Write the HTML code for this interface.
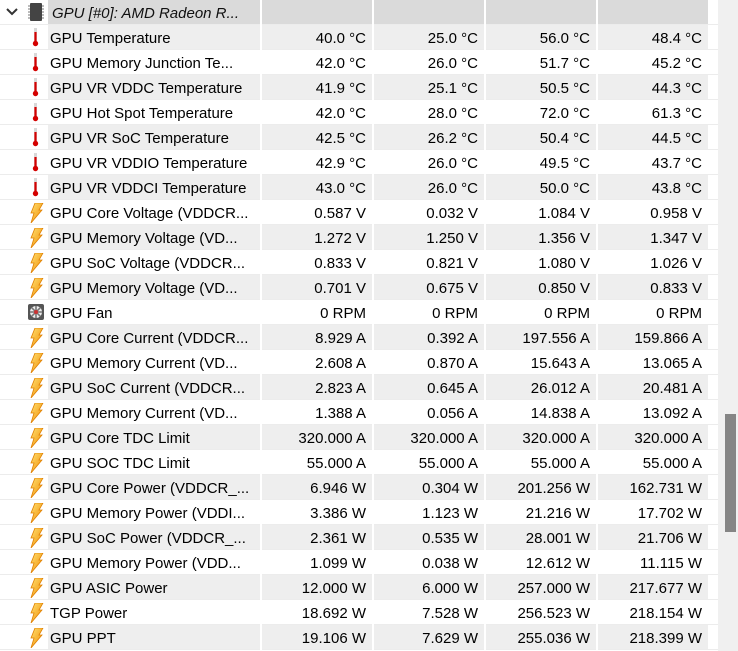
<!DOCTYPE html>
<html><head><meta charset="utf-8"><style>
body{margin:0;width:738px;height:651px;background:#fff;overflow:hidden;font-family:Tahoma,"Liberation Sans","DejaVu Sans",sans-serif;font-size:15px;color:#000;position:relative}
.r{position:absolute;left:0;width:718px;height:25px;border-bottom:1px solid #ececec;box-sizing:border-box}
.bg{position:absolute;left:48px;width:660px;top:0;height:24px}
.g .bg{background:#eeeeee}
.h .bg{background:#dadada}
.n{position:absolute;left:50px;top:5px;white-space:nowrap}
.v{position:absolute;top:5px;width:106px;text-align:right;white-space:nowrap}
.c1{left:260px}.c2{left:372px}.c3{left:484px}.c4{left:596px}
.sep{position:absolute;top:0;height:651px;width:2px;background:#fff}
.ic{position:absolute;left:27px;top:3px}
.sb{position:absolute;left:718px;top:0;width:20px;height:651px;background:#f0f0f0}
.th{position:absolute;left:725px;top:414px;width:11px;height:118px;background:#858585}
</style></head><body>
<svg width="0" height="0" style="position:absolute"><defs>
<g id="t"><rect x="7" y="0" width="3" height="15" fill="#d8d8d8"/><rect x="7.4" y="4" width="2.2" height="11" fill="#d40000"/><circle cx="8.5" cy="15.5" r="2.7" fill="#d40000"/></g>
<linearGradient id="lg" x1="0" y1="0" x2="1" y2="1"><stop offset="0" stop-color="#ffe070"/><stop offset="1" stop-color="#f08a00"/></linearGradient>
<g id="b"><path d="M8 0 L16 0 L12 7 L15 7 L4 20 L7 10 L4 10 Z" fill="url(#lg)" stroke="#e08000" stroke-width="0.8"/></g>
<g id="f"><rect x="1" y="1" width="16" height="16" rx="2" fill="#555"/><circle cx="9" cy="9" r="6" fill="#eee"/><path d="M9 3V15M3 9H15M4.8 4.8L13.2 13.2M13.2 4.8L4.8 13.2" stroke="#777" stroke-width="1.6"/><circle cx="9" cy="9" r="2" fill="#c33"/></g>
</defs></svg>

<div class="r h" style="top:0"><div class="bg"></div>
<svg style="position:absolute;left:6px;top:7px" width="12" height="10"><path d="M1 2 L6 7 L11 2" stroke="#333" stroke-width="2" fill="none"/></svg>
<svg style="position:absolute;left:27px;top:2px" width="18" height="20"><rect x="3" y="1" width="12" height="18" rx="1" fill="#444"/><path d="M1 4h2M1 7h2M1 10h2M1 13h2M1 16h2M15 4h2M15 7h2M15 10h2M15 13h2M15 16h2" stroke="#777"/></svg>
<div class="n" style="left:52px;font-style:italic;color:#111">GPU [#0]: AMD Radeon R...</div></div>

<div class="r g" style="top:25px"><div class="bg"></div><svg class="ic" width="18" height="20"><use href="#t"/></svg><div class="n">GPU Temperature</div><div class="v c1">40.0 °C</div><div class="v c2">25.0 °C</div><div class="v c3">56.0 °C</div><div class="v c4">48.4 °C</div></div>
<div class="r" style="top:50px"><div class="bg"></div><svg class="ic" width="18" height="20"><use href="#t"/></svg><div class="n">GPU Memory Junction Te...</div><div class="v c1">42.0 °C</div><div class="v c2">26.0 °C</div><div class="v c3">51.7 °C</div><div class="v c4">45.2 °C</div></div>
<div class="r g" style="top:75px"><div class="bg"></div><svg class="ic" width="18" height="20"><use href="#t"/></svg><div class="n">GPU VR VDDC Temperature</div><div class="v c1">41.9 °C</div><div class="v c2">25.1 °C</div><div class="v c3">50.5 °C</div><div class="v c4">44.3 °C</div></div>
<div class="r" style="top:100px"><div class="bg"></div><svg class="ic" width="18" height="20"><use href="#t"/></svg><div class="n">GPU Hot Spot Temperature</div><div class="v c1">42.0 °C</div><div class="v c2">28.0 °C</div><div class="v c3">72.0 °C</div><div class="v c4">61.3 °C</div></div>
<div class="r g" style="top:125px"><div class="bg"></div><svg class="ic" width="18" height="20"><use href="#t"/></svg><div class="n">GPU VR SoC Temperature</div><div class="v c1">42.5 °C</div><div class="v c2">26.2 °C</div><div class="v c3">50.4 °C</div><div class="v c4">44.5 °C</div></div>
<div class="r" style="top:150px"><div class="bg"></div><svg class="ic" width="18" height="20"><use href="#t"/></svg><div class="n">GPU VR VDDIO Temperature</div><div class="v c1">42.9 °C</div><div class="v c2">26.0 °C</div><div class="v c3">49.5 °C</div><div class="v c4">43.7 °C</div></div>
<div class="r g" style="top:175px"><div class="bg"></div><svg class="ic" width="18" height="20"><use href="#t"/></svg><div class="n">GPU VR VDDCI Temperature</div><div class="v c1">43.0 °C</div><div class="v c2">26.0 °C</div><div class="v c3">50.0 °C</div><div class="v c4">43.8 °C</div></div>
<div class="r" style="top:200px"><div class="bg"></div><svg class="ic" width="18" height="20"><use href="#b"/></svg><div class="n">GPU Core Voltage (VDDCR...</div><div class="v c1">0.587 V</div><div class="v c2">0.032 V</div><div class="v c3">1.084 V</div><div class="v c4">0.958 V</div></div>
<div class="r g" style="top:225px"><div class="bg"></div><svg class="ic" width="18" height="20"><use href="#b"/></svg><div class="n">GPU Memory Voltage (VD...</div><div class="v c1">1.272 V</div><div class="v c2">1.250 V</div><div class="v c3">1.356 V</div><div class="v c4">1.347 V</div></div>
<div class="r" style="top:250px"><div class="bg"></div><svg class="ic" width="18" height="20"><use href="#b"/></svg><div class="n">GPU SoC Voltage (VDDCR...</div><div class="v c1">0.833 V</div><div class="v c2">0.821 V</div><div class="v c3">1.080 V</div><div class="v c4">1.026 V</div></div>
<div class="r g" style="top:275px"><div class="bg"></div><svg class="ic" width="18" height="20"><use href="#b"/></svg><div class="n">GPU Memory Voltage (VD...</div><div class="v c1">0.701 V</div><div class="v c2">0.675 V</div><div class="v c3">0.850 V</div><div class="v c4">0.833 V</div></div>
<div class="r" style="top:300px"><div class="bg"></div><svg class="ic" width="18" height="20"><use href="#f"/></svg><div class="n">GPU Fan</div><div class="v c1">0 RPM</div><div class="v c2">0 RPM</div><div class="v c3">0 RPM</div><div class="v c4">0 RPM</div></div>
<div class="r g" style="top:325px"><div class="bg"></div><svg class="ic" width="18" height="20"><use href="#b"/></svg><div class="n">GPU Core Current (VDDCR...</div><div class="v c1">8.929 A</div><div class="v c2">0.392 A</div><div class="v c3">197.556 A</div><div class="v c4">159.866 A</div></div>
<div class="r" style="top:350px"><div class="bg"></div><svg class="ic" width="18" height="20"><use href="#b"/></svg><div class="n">GPU Memory Current (VD...</div><div class="v c1">2.608 A</div><div class="v c2">0.870 A</div><div class="v c3">15.643 A</div><div class="v c4">13.065 A</div></div>
<div class="r g" style="top:375px"><div class="bg"></div><svg class="ic" width="18" height="20"><use href="#b"/></svg><div class="n">GPU SoC Current (VDDCR...</div><div class="v c1">2.823 A</div><div class="v c2">0.645 A</div><div class="v c3">26.012 A</div><div class="v c4">20.481 A</div></div>
<div class="r" style="top:400px"><div class="bg"></div><svg class="ic" width="18" height="20"><use href="#b"/></svg><div class="n">GPU Memory Current (VD...</div><div class="v c1">1.388 A</div><div class="v c2">0.056 A</div><div class="v c3">14.838 A</div><div class="v c4">13.092 A</div></div>
<div class="r g" style="top:425px"><div class="bg"></div><svg class="ic" width="18" height="20"><use href="#b"/></svg><div class="n">GPU Core TDC Limit</div><div class="v c1">320.000 A</div><div class="v c2">320.000 A</div><div class="v c3">320.000 A</div><div class="v c4">320.000 A</div></div>
<div class="r" style="top:450px"><div class="bg"></div><svg class="ic" width="18" height="20"><use href="#b"/></svg><div class="n">GPU SOC TDC Limit</div><div class="v c1">55.000 A</div><div class="v c2">55.000 A</div><div class="v c3">55.000 A</div><div class="v c4">55.000 A</div></div>
<div class="r g" style="top:475px"><div class="bg"></div><svg class="ic" width="18" height="20"><use href="#b"/></svg><div class="n">GPU Core Power (VDDCR_...</div><div class="v c1">6.946 W</div><div class="v c2">0.304 W</div><div class="v c3">201.256 W</div><div class="v c4">162.731 W</div></div>
<div class="r" style="top:500px"><div class="bg"></div><svg class="ic" width="18" height="20"><use href="#b"/></svg><div class="n">GPU Memory Power (VDDI...</div><div class="v c1">3.386 W</div><div class="v c2">1.123 W</div><div class="v c3">21.216 W</div><div class="v c4">17.702 W</div></div>
<div class="r g" style="top:525px"><div class="bg"></div><svg class="ic" width="18" height="20"><use href="#b"/></svg><div class="n">GPU SoC Power (VDDCR_...</div><div class="v c1">2.361 W</div><div class="v c2">0.535 W</div><div class="v c3">28.001 W</div><div class="v c4">21.706 W</div></div>
<div class="r" style="top:550px"><div class="bg"></div><svg class="ic" width="18" height="20"><use href="#b"/></svg><div class="n">GPU Memory Power (VDD...</div><div class="v c1">1.099 W</div><div class="v c2">0.038 W</div><div class="v c3">12.612 W</div><div class="v c4">11.115 W</div></div>
<div class="r g" style="top:575px"><div class="bg"></div><svg class="ic" width="18" height="20"><use href="#b"/></svg><div class="n">GPU ASIC Power</div><div class="v c1">12.000 W</div><div class="v c2">6.000 W</div><div class="v c3">257.000 W</div><div class="v c4">217.677 W</div></div>
<div class="r" style="top:600px"><div class="bg"></div><svg class="ic" width="18" height="20"><use href="#b"/></svg><div class="n">TGP Power</div><div class="v c1">18.692 W</div><div class="v c2">7.528 W</div><div class="v c3">256.523 W</div><div class="v c4">218.154 W</div></div>
<div class="r g" style="top:625px"><div class="bg"></div><svg class="ic" width="18" height="20"><use href="#b"/></svg><div class="n">GPU PPT</div><div class="v c1">19.106 W</div><div class="v c2">7.629 W</div><div class="v c3">255.036 W</div><div class="v c4">218.399 W</div></div>

<div class="sep" style="left:260px"></div><div class="sep" style="left:372px"></div><div class="sep" style="left:484px"></div><div class="sep" style="left:596px"></div>
<div class="sb"></div><div class="th"></div>
</body></html>
